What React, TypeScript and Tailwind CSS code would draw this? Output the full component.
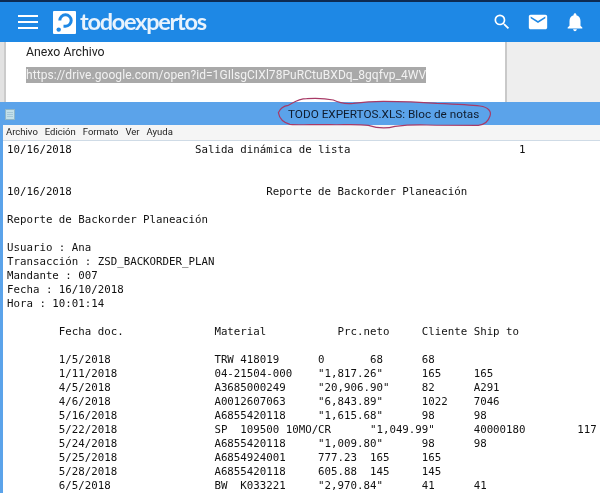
const reportLines = [
  "10/16/2018                   Salida dinámica de lista                          1",
  "",
  "",
  "10/16/2018                              Reporte de Backorder Planeación",
  "",
  "Reporte de Backorder Planeación",
  "",
  "Usuario : Ana",
  "Transacción : ZSD_BACKORDER_PLAN",
  "Mandante : 007",
  "Fecha : 16/10/2018",
  "Hora : 10:01:14",
  "",
  "        Fecha doc.              Material           Prc.neto     Cliente Ship to",
  "",
  "        1/5/2018                TRW 418019      0       68      68",
  '        1/11/2018               04-21504-000    "1,817.26"      165     165',
  '        4/5/2018                A3685000249     "20,906.90"     82      A291',
  '        4/6/2018                A0012607063     "6,843.89"      1022    7046',
  '        5/16/2018               A6855420118     "1,615.68"      98      98',
  '        5/22/2018               SP  109500 10MO/CR      "1,049.99"      40000180        117',
  '        5/24/2018               A6855420118     "1,009.80"      98      98',
  "        5/25/2018               A6854924001     777.23  165     165",
  "        5/28/2018               A6855420118     605.88  145     145",
  '        6/5/2018                BW  K033221     "2,970.84"      41      41',
];

function Logo() {
  return (
    <svg width="23" height="23" viewBox="0 0 23 23" className="shrink-0">
      <rect width="23" height="23" rx="1" fill="#fff" />
      <path d="M6.8 9.5 A5.7 5.7 0 1 1 12.5 15.2 H10.5" fill="none" stroke="#1e88e5" strokeWidth="3" />
      <circle cx="5.7" cy="18.6" r="2.2" fill="#1e88e5" />
    </svg>
  );
}

export default function App() {
  return (
    <div className="relative h-[495px] w-[600px] overflow-hidden bg-white font-['Roboto',sans-serif] blur-[0.35px]">
      <div className="h-0.5 bg-[#0d2a52]" />
      <header className="flex h-10 items-center bg-[#1e88e5] text-white">
        <div className="ml-[18px] flex w-5 flex-col gap-1">
          <span className="h-0.5 bg-white" />
          <span className="h-0.5 bg-white" />
          <span className="h-0.5 bg-white" />
        </div>
        <div className="ml-[15px] flex items-center">
          <Logo />
          <span className="ml-1 font-['Lato',sans-serif] text-[23.5px] leading-none font-bold tracking-[-1.25px] text-[#e8f3fd]">
            todoexpertos
          </span>
        </div>
        <div className="ml-auto mr-3.5 flex items-center">
          <svg width="20" height="20" viewBox="0 0 24 24" fill="#fff">
            <path d="M15.5 14h-.79l-.28-.27A6.47 6.47 0 0 0 16 9.5 6.5 6.5 0 1 0 9.5 16c1.61 0 3.09-.59 4.23-1.57l.27.28v.79l5 4.99L20.49 19l-4.99-5zm-6 0C7.01 14 5 11.99 5 9.5S7.01 5 9.5 5 14 7.01 14 9.5 11.99 14 9.5 14z" />
          </svg>
          <svg width="22" height="22" viewBox="0 0 24 24" fill="#fff" className="ml-[15px]">
            <path d="M20 4H4c-1.1 0-2 .9-2 2v12c0 1.1.9 2 2 2h16c1.1 0 2-.9 2-2V6c0-1.1-.9-2-2-2zm0 4-8 5-8-5V6l8 5 8-5v2z" />
          </svg>
          <svg width="22" height="22" viewBox="0 0 24 24" fill="#fff" className="ml-[15px]">
            <path d="M12 22c1.1 0 2-.9 2-2h-4c0 1.1.9 2 2 2zm6-6v-5c0-3.07-1.64-5.64-4.5-6.32V4c0-.83-.67-1.5-1.5-1.5s-1.5.67-1.5 1.5v.68C7.63 5.36 6 7.92 6 11v5l-2 2v1h16v-1l-2-2z" />
          </svg>
        </div>
      </header>

      <section className="flex h-[60px] bg-[#eeeeee]">
        <div className="w-1.5 border-r-2 border-[#cbcbcb] bg-[#e2e2e2]" />
        <div className="w-[501px] border-r-2 border-[#c9c9c9] bg-white pl-5 pt-[3px] text-[#222]">
          <p className="text-[12.3px] leading-[15px]">Anexo Archivo</p>
          <p className="mt-2 text-[12px] leading-[14px]">
            <span className="bg-[#a9a9a9] py-px tracking-[0.06px] text-[#f2f2f2]">
              https://drive.google.com/open?id=1GIlsgCIXl78PuRCtuBXDq_8gqfvp_4WV
            </span>
          </p>
        </div>
      </section>

      <section className="border-l-[3px] border-[#5ba3ea]">
        <div className="-ml-[3px] flex h-[23px] items-center bg-[#5ba3ea] pt-0.5">
          <svg width="10" height="11" viewBox="0 0 10 11" className="ml-[5px]">
            <rect x="0.5" y="0.5" width="9" height="10" fill="#c3e0ea" stroke="#8fb6c9" />
            <path d="M2 3.5h6M2 5.5h6M2 7.5h6" stroke="#a5c8d8" />
          </svg>
          <span className="ml-[273px] text-[11.75px] text-[#0f1c2e]">TODO EXPERTOS.XLS: Bloc de notas</span>
        </div>
        <nav className="flex h-4 items-center gap-[7px] border-b border-[#cfdbe6] bg-[#f5f5f5] pl-[3px] text-[9.5px] text-[#222]">
          <span>Archivo</span>
          <span>Edición</span>
          <span>Formato</span>
          <span>Ver</span>
          <span>Ayuda</span>
        </nav>
        <pre className="pl-1 pt-[2px] font-['DejaVu_Sans_Mono',monospace] text-[10.78px] leading-[14px] text-[#111]">
          {reportLines.join("\n")}
        </pre>
      </section>

      {/* trazo rojo a mano sobre el título */}
      <svg width="230" height="45" viewBox="0 0 690 135" className="absolute left-[270px] top-[92px]" fill="none">
        <path
          d="M25 62 C30 50 40 42 55 40 C70 32 85 20 110 20 C140 18 170 20 190 24 C210 34 230 36 250 34 C280 30 310 28 340 28 C400 28 450 30 500 34 C550 36 600 38 630 42 C655 46 665 58 660 72 C655 88 645 98 625 100 C580 100 520 100 470 99 C430 98 400 100 375 103 C350 110 320 108 295 100 C260 96 220 99 180 98 C130 97 90 100 60 97 C40 92 28 78 25 62 Z"
          stroke="#a83a66"
          strokeWidth="3.6"
        />
      </svg>
    </div>
  );
}
